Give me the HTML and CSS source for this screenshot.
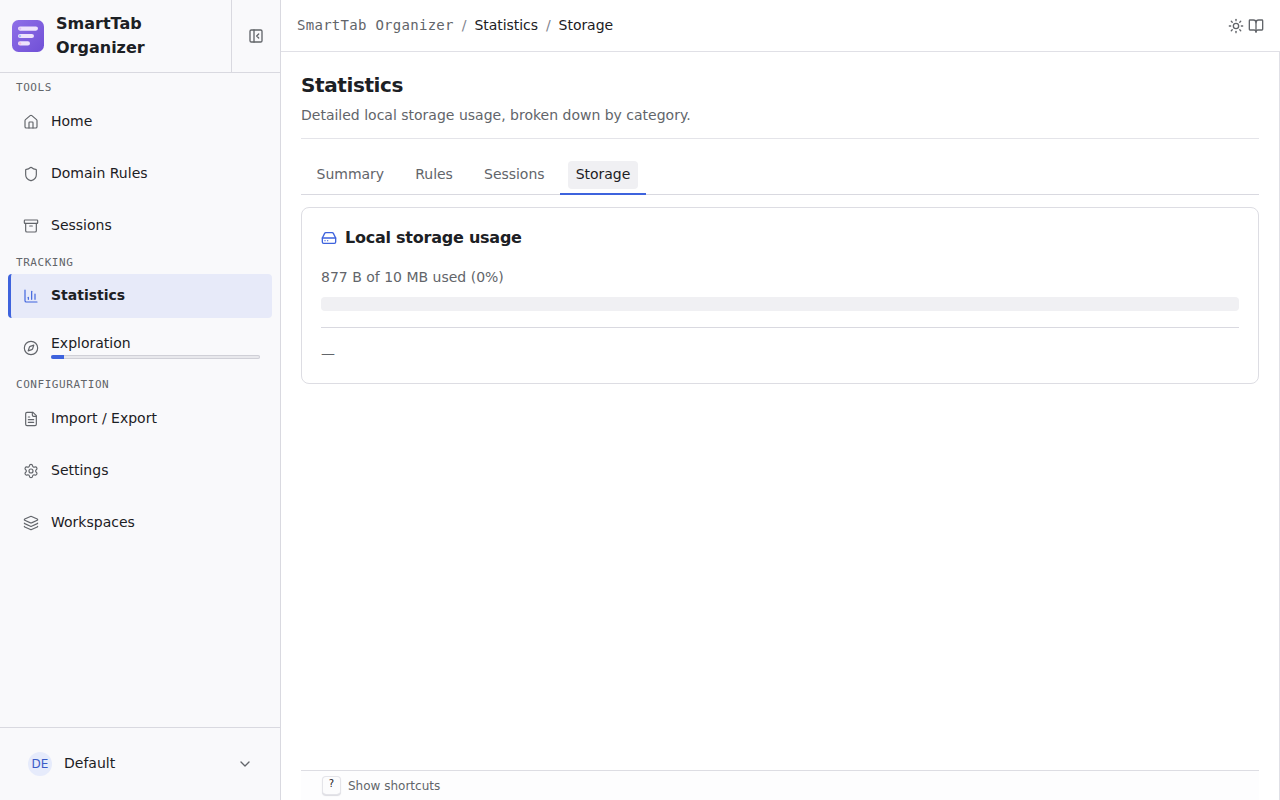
FILE: index.html
```
<!DOCTYPE html>
<html lang="en">
<head>
    <meta charset="UTF-8">
    <meta name="viewport" content="width=device-width, initial-scale=1.0">
    <title>SmartTab Organizer - Statistics</title>
    <link rel="stylesheet" href="styles.css">
</head>
<body>
    <div class="app">
        <aside class="sidebar">
            <div class="brand">
                <div class="brand-name">
                    <svg class="logo" viewBox="0 0 32 32">
                        <defs>
                            <linearGradient id="logo-bg" x1="0" y1="0" x2="1" y2="1">
                                <stop offset="0" stop-color="#8f70e8"/>
                                <stop offset="1" stop-color="#7050d6"/>
                            </linearGradient>
                        </defs>
                        <rect width="32" height="32" rx="6.5" fill="url(#logo-bg)"/>
                        <rect x="6" y="6.5" width="20" height="4.2" rx="2.1" fill="#eee3fc"/>
                        <rect x="6" y="13.9" width="16" height="4.2" rx="2.1" fill="#eee3fc"/>
                        <rect x="6" y="21.3" width="12" height="4.2" rx="2.1" fill="#eee3fc"/>
                        <circle cx="8" cy="8.6" r="1.2" fill="#dcc0f5"/>
                        <circle cx="8" cy="16" r="1.2" fill="#a5c5fa"/>
                        <circle cx="8" cy="23.4" r="1.2" fill="#f5bce0"/>
                    </svg>
                    <span>SmartTab Organizer</span>
                </div>
                <button class="collapse">
                    <svg class="icon bold" viewBox="0 0 24 24"><rect width="18" height="18" x="3" y="3" rx="2"/><path d="M9 3v18"/><path d="m16 15-3-3 3-3"/></svg>
                </button>
            </div>

            <nav class="nav">
                <div class="nav-label">TOOLS</div>
                <div class="nav-group">
                    <a class="nav-item">
                        <svg class="icon" viewBox="0 0 24 24"><path d="M15 21v-8a1 1 0 0 0-1-1h-4a1 1 0 0 0-1 1v8"/><path d="M3 10a2 2 0 0 1 .709-1.528l7-5.999a2 2 0 0 1 2.582 0l7 5.999A2 2 0 0 1 21 10v9a2 2 0 0 1-2 2H5a2 2 0 0 1-2-2z"/></svg>
                        <span>Home</span>
                    </a>
                    <a class="nav-item">
                        <svg class="icon" viewBox="0 0 24 24"><path d="M20 13c0 5-3.5 7.5-7.66 8.95a1 1 0 0 1-.67-.01C7.5 20.5 4 18 4 13V6a1 1 0 0 1 1-1c2 0 4.5-1.2 6.24-2.72a1.17 1.17 0 0 1 1.52 0C14.51 3.81 17 5 19 5a1 1 0 0 1 1 1z"/></svg>
                        <span>Domain Rules</span>
                    </a>
                    <a class="nav-item">
                        <svg class="icon" viewBox="0 0 24 24"><rect width="20" height="5" x="2" y="3" rx="1"/><path d="M4 8v11a2 2 0 0 0 2 2h12a2 2 0 0 0 2-2V8"/><path d="M10 12h4"/></svg>
                        <span>Sessions</span>
                    </a>
                </div>
                <div class="nav-label">TRACKING</div>
                <div class="nav-group">
                    <a class="nav-item active">
                        <svg class="icon" viewBox="0 0 24 24"><path d="M3 3v16a2 2 0 0 0 2 2h16"/><path d="M18 17V9"/><path d="M13 17V5"/><path d="M8 17v-3"/></svg>
                        <span>Statistics</span>
                    </a>
                    <a class="nav-item">
                        <svg class="icon" viewBox="0 0 24 24"><path d="m16.24 7.76-1.804 5.411a2 2 0 0 1-1.265 1.265L7.76 16.24l1.804-5.411a2 2 0 0 1 1.265-1.265z"/><circle cx="12" cy="12" r="10"/></svg>
                        <div class="explore">
                            <span>Exploration</span>
                            <div class="explore-bar"><div class="explore-fill" style="width: 6%"></div></div>
                        </div>
                    </a>
                </div>
                <div class="nav-label">CONFIGURATION</div>
                <div class="nav-group">
                    <a class="nav-item">
                        <svg class="icon" viewBox="0 0 24 24"><path d="M15 2H6a2 2 0 0 0-2 2v16a2 2 0 0 0 2 2h12a2 2 0 0 0 2-2V7Z"/><path d="M14 2v4a2 2 0 0 0 2 2h4"/><path d="M10 9H8"/><path d="M16 13H8"/><path d="M16 17H8"/></svg>
                        <span>Import / Export</span>
                    </a>
                    <a class="nav-item">
                        <svg class="icon" viewBox="0 0 24 24"><path d="M9.671 4.136a2.34 2.34 0 0 1 4.659 0 2.34 2.34 0 0 0 3.319 1.915 2.34 2.34 0 0 1 2.33 4.033 2.34 2.34 0 0 0 0 3.831 2.34 2.34 0 0 1-2.33 4.033 2.34 2.34 0 0 0-3.319 1.915 2.34 2.34 0 0 1-4.659 0 2.34 2.34 0 0 0-3.32-1.915 2.34 2.34 0 0 1-2.33-4.033 2.34 2.34 0 0 0 0-3.831A2.34 2.34 0 0 1 6.35 6.051a2.34 2.34 0 0 0 3.319-1.915"/><circle cx="12" cy="12" r="3"/></svg>
                        <span>Settings</span>
                    </a>
                    <a class="nav-item">
                        <svg class="icon" viewBox="0 0 24 24"><path d="M12.83 2.18a2 2 0 0 0-1.66 0L2.6 6.08a1 1 0 0 0 0 1.83l8.58 3.91a2 2 0 0 0 1.66 0l8.58-3.9a1 1 0 0 0 0-1.83z"/><path d="M2 12a1 1 0 0 0 .58.91l8.6 3.91a2 2 0 0 0 1.65 0l8.58-3.9A1 1 0 0 0 22 12"/><path d="M2 17a1 1 0 0 0 .58.91l8.6 3.91a2 2 0 0 0 1.65 0l8.58-3.9A1 1 0 0 0 22 17"/></svg>
                        <span>Workspaces</span>
                    </a>
                </div>
            </nav>

            <div class="workspace">
                <span class="avatar">DE</span>
                <span class="workspace-name">Default</span>
                <svg class="icon bold chevron" viewBox="0 0 24 24"><path d="m6 9 6 6 6-6"/></svg>
            </div>
        </aside>

        <div class="main">
            <header class="topbar">
                <div class="crumbs">
                    <span class="crumb-root">SmartTab Organizer</span>
                    <span class="slash">/</span>
                    <span>Statistics</span>
                    <span class="slash">/</span>
                    <span>Storage</span>
                </div>
                <div class="actions">
                    <svg class="icon bold" viewBox="0 0 24 24"><circle cx="12" cy="12" r="4"/><path d="M12 2v2"/><path d="M12 20v2"/><path d="m4.93 4.93 1.41 1.41"/><path d="m17.66 17.66 1.41 1.41"/><path d="M2 12h2"/><path d="M20 12h2"/><path d="m6.34 17.66-1.41 1.41"/><path d="m19.07 4.93-1.41 1.41"/></svg>
                    <svg class="icon bold" viewBox="0 0 24 24"><path d="M12 7v14"/><path d="M3 18a1 1 0 0 1-1-1V4a1 1 0 0 1 1-1h5a4 4 0 0 1 4 4 4 4 0 0 1 4-4h5a1 1 0 0 1 1 1v13a1 1 0 0 1-1 1h-6a3 3 0 0 0-3 3 3 3 0 0 0-3-3z"/></svg>
                </div>
            </header>

            <main class="content">
                <div class="page-head">
                    <h1>Statistics</h1>
                    <p>Detailed local storage usage, broken down by category.</p>
                </div>

                <div class="tabs">
                    <button class="tab"><span>Summary</span></button>
                    <button class="tab"><span>Rules</span></button>
                    <button class="tab"><span>Sessions</span></button>
                    <button class="tab selected"><span>Storage</span></button>
                </div>

                <section class="card">
                    <h2>
                        <svg class="icon bold" viewBox="0 0 24 24"><path d="M22 12H2"/><path d="M5.45 5.11 2 12v6a2 2 0 0 0 2 2h16a2 2 0 0 0 2-2v-6l-3.45-6.89A2 2 0 0 0 16.76 4H7.24a2 2 0 0 0-1.79 1.11z"/><path d="M6 16h.01"/><path d="M10 16h.01"/></svg>
                        Local storage usage
                    </h2>
                    <p class="usage">877 B of 10 MB used (0%)</p>
                    <div class="usage-bar"></div>
                    <div class="breakdown">—</div>
                </section>

                <footer class="shortcuts">
                    <kbd>?</kbd>
                    <span>Show shortcuts</span>
                </footer>
            </main>
        </div>
    </div>
</body>
</html>
```
FILE: styles.css
```
* {
    box-sizing: border-box;
}

body {
    margin: 0;
    font-family: "DejaVu Sans", sans-serif;
    font-size: 14px;
    line-height: 20px;
    color: #1c2024;
    background: #fff;
}

h1, h2, p {
    margin: 0;
}

button {
    padding: 0;
    border: 0;
    background: none;
    font: inherit;
    color: inherit;
}

.app {
    display: flex;
    height: 100vh;
    overflow: hidden;
}

.icon {
    width: 16px;
    height: 16px;
    flex: none;
    fill: none;
    stroke: #62656a;
    stroke-width: 1.75;
    stroke-linecap: round;
    stroke-linejoin: round;
}

.icon.bold {
    stroke-width: 2;
}

/* Sidebar */
.sidebar {
    display: flex;
    flex-direction: column;
    width: 281px;
    flex: none;
    background: #f9f9fb;
    border-right: 1px solid #d9d9e0;
}

.brand {
    display: flex;
    height: 73px;
    border-bottom: 1px solid #d9d9e0;
}

.brand-name {
    display: flex;
    align-items: center;
    gap: 12px;
    flex: 1;
    padding-left: 12px;
    padding-right: 60px;
    font-size: 16px;
    line-height: 24px;
    font-weight: bold;
}

.logo {
    width: 32px;
    height: 32px;
    flex: none;
}

.collapse {
    display: flex;
    align-items: center;
    justify-content: center;
    width: 49px;
    border-left: 1px solid #d9d9e0;
}

.nav {
    flex: 1;
}

.nav-label {
    padding: 7px 16px 3px;
    font-family: "DejaVu Sans Mono", monospace;
    font-size: 11px;
    line-height: 16.5px;
    letter-spacing: 0.05em;
    color: #62656a;
}

.nav-group {
    display: flex;
    flex-direction: column;
    gap: 8px;
    padding: 0 8px;
}

.nav-item {
    display: flex;
    align-items: center;
    gap: 12px;
    height: 44px;
    padding: 0 12px;
    border-left: 3px solid transparent;
    border-radius: 4px;
}

.nav-item > span {
    margin-top: -2px;
}

.nav-item.active {
    background: #e7eaf9;
    border-left-color: #3e63dd;
    font-weight: bold;
}

.nav-item.active .icon {
    stroke: #3e63dd;
}

.explore {
    flex: 1;
    padding-bottom: 4px;
}

.explore-bar {
    height: 4px;
    margin-top: 2px;
    border-radius: 2px;
    background: #e8e8ec;
    box-shadow: inset 0 0 0 1px #d0d0d7;
    overflow: hidden;
}

.explore-fill {
    height: 100%;
    background: #3e63dd;
}

.workspace {
    display: flex;
    align-items: center;
    gap: 12px;
    height: 73px;
    padding: 0 27px 0 28px;
    border-top: 1px solid #d9d9e0;
}

.avatar {
    width: 24px;
    height: 24px;
    border-radius: 50%;
    background: #e6ebfb;
    color: #3a5bc7;
    font-size: 12px;
    line-height: 24px;
    text-align: center;
}

.workspace-name {
    flex: 1;
    margin-top: -2px;
}

/* Main area */
.main {
    display: flex;
    flex-direction: column;
    flex: 1;
    min-width: 0;
}

.topbar {
    display: flex;
    align-items: center;
    justify-content: space-between;
    height: 51px;
    padding: 0 16px;
}

.crumbs {
    display: flex;
    gap: 8px;
    padding-bottom: 2px;
    letter-spacing: -0.05px;
}

.crumb-root {
    font-family: "DejaVu Sans Mono", monospace;
    letter-spacing: 0.02em;
    color: #62656a;
}

.slash {
    color: #80838d;
}

.actions {
    display: flex;
    gap: 4px;
}

.content {
    display: flex;
    flex-direction: column;
    flex: 1;
    padding: 20px 20px 0;
    border-top: 1px solid #e0e0e6;
    border-right: 1px solid #e0e0e6;
}

.page-head {
    padding-bottom: 13px;
    border-bottom: 1px solid #e4e4e9;
    color: #62656a;
}

.page-head h1 {
    margin-bottom: 7px;
    font-size: 20px;
    line-height: 26px;
    letter-spacing: -0.02em;
    color: #1c2024;
}

.tabs {
    display: flex;
    height: 40px;
    margin-top: 16px;
    box-shadow: inset 0 -1px 0 #d9d9e0;
}

.tab {
    display: flex;
    align-items: center;
    padding: 0 7.8px;
    letter-spacing: -0.03px;
    color: #62656a;
}

.tab span {
    padding: 3px 7.8px 5px;
    border-radius: 4px;
}

.tab.selected {
    color: #1c2024;
    box-shadow: inset 0 -2px 0 #3e63dd;
}

.tab.selected span {
    background: #f0f0f3;
}

.card {
    height: 177px;
    margin-top: 12px;
    padding: 18px 19px 0;
    border: 1px solid #dddde3;
    border-radius: 8px;
}

.card h2 {
    display: flex;
    align-items: center;
    gap: 8px;
    font-size: 16px;
    line-height: 24px;
    letter-spacing: -0.015em;
}

.card h2 .icon {
    stroke: #3e63dd;
}

.usage {
    margin-top: 17px;
    color: #62656a;
}

.usage-bar {
    height: 14px;
    margin-top: 10px;
    border-radius: 4px;
    background: #f0f0f3;
}

.breakdown {
    margin-top: 16px;
    padding-top: 15px;
    border-top: 1px solid #d9d9e0;
    color: #62656a;
}

.shortcuts {
    display: flex;
    align-items: center;
    gap: 7px;
    height: 30px;
    margin-top: auto;
    padding-left: 21px;
    border-top: 1px solid #dddde3;
    background: #fdfdfe;
    font-size: 12px;
    color: #62656a;
}

kbd {
    width: 19px;
    height: 19px;
    border-radius: 4px;
    background: #fcfcfd;
    box-shadow: inset 0 0 0 1px #e4e4e9, inset 0 -1px 0 #cdcdd4, 0 1px 1px #dcdce2;
    font-family: "DejaVu Sans", sans-serif;
    font-size: 10px;
    line-height: 15px;
    text-align: center;
    color: #1c2024;
}
```
